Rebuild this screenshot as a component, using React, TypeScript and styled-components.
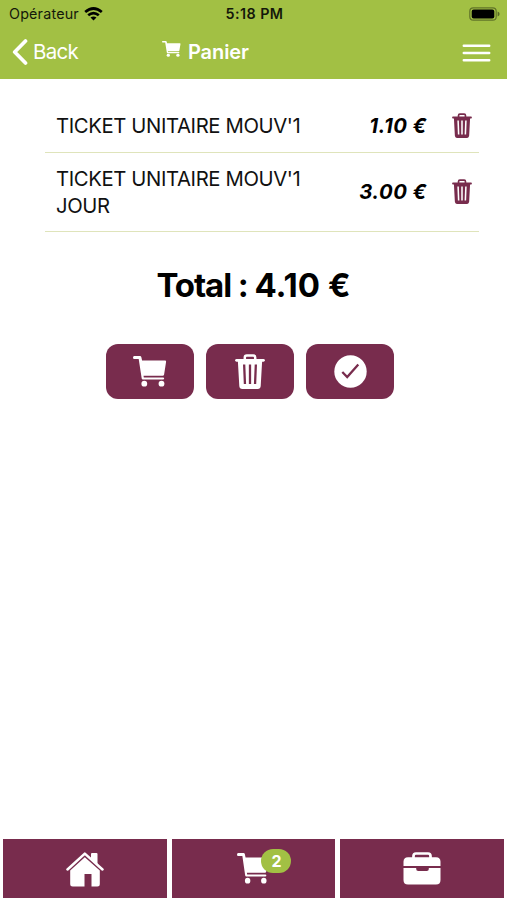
import React from 'react';
import styled, { createGlobalStyle } from 'styled-components';

const GREEN = '#a2c044';
const PLUM = '#782c4d';

const GlobalStyle = createGlobalStyle`
  * { box-sizing: border-box; }
  body { margin: 0; background: #fff; font-family: Inter, 'Liberation Sans', sans-serif; color: #0b0b0b; }
  svg { display: block; flex: none; }
  button { font: inherit; border: 0; padding: 0; background: none; }
`;

const Screen = styled.div`
  display: flex;
  flex-direction: column;
  height: 900px;
  width: 507px;
  overflow: hidden;
`;

const Header = styled.header`
  background: ${GREEN};
  height: 79px;
  flex: none;
`;

const StatusBar = styled.div`
  display: grid;
  grid-template-columns: 1fr auto 1fr;
  align-items: center;
  height: 27px;
  padding: 0 7px 0 9px;
  color: #14180a;
`;

const Carrier = styled.div`
  display: flex;
  align-items: center;
  gap: 5px;
  font-size: 14.3px;
  letter-spacing: 0.2px;
`;

const Clock = styled.div`
  font-size: 14.3px;
  font-weight: 600;
  letter-spacing: 0.45px;
`;

const Battery = styled.div`
  display: flex;
  justify-content: flex-end;
`;

const NavBar = styled.div`
  display: grid;
  grid-template-columns: 162px 1fr auto;
  align-items: center;
  height: 50px;
  padding: 0 16px 0 0;
  color: #fff;
`;

const BackButton = styled.button`
  display: flex;
  align-items: center;
  gap: 5px;
  padding-left: 12px;
  color: #fff;
  font-size: 20.5px;
  line-height: 26px;
  letter-spacing: -0.7px;
`;

const Title = styled.h1`
  display: flex;
  align-items: center;
  gap: 7px;
  margin: 0;
  font-size: 20px;
  font-weight: 600;
  line-height: 26px;
  letter-spacing: -0.1px;
  & > svg { margin-top: -6px; }
`;

const MenuButton = styled.button`
  color: #fff;
  padding-top: 2px;
`;

const Main = styled.main`
  flex: 1;
  padding: 22px 28px 0 45px;
`;

const CartList = styled.ul`
  list-style: none;
  margin: 0;
  padding: 0;
`;

const CartItem = styled.li`
  display: grid;
  grid-template-columns: 260px 1fr 52px;
  align-items: center;
  padding: 12px 0 12px 11px;
  border-bottom: 1px solid #dfe4bb;
  color: ${PLUM};
  &:first-child { padding-top: 11px; padding-bottom: 13px; }
  & > button { color: inherit; padding-left: 25px; }
  &:not(:first-child) > :not(:first-child) { margin-bottom: 2px; }
`;

const ItemName = styled.span`
  color: #111;
  font-size: 20.3px;
  line-height: 27px;
  letter-spacing: -0.38px;
`;

const Price = styled.span`
  color: #000;
  font-size: 20.3px;
  font-style: italic;
  font-weight: 700;
  letter-spacing: 0.5px;
  text-align: right;
`;

const Total = styled.h2`
  margin: 33px 0 0 -17px;
  font-size: 33px;
  line-height: 40px;
  font-weight: 700;
  text-align: center;
  color: #000;
`;

const TotalLabel = styled.span`
  letter-spacing: -1.1px;
`;

const Actions = styled.div`
  display: flex;
  gap: 12px;
  margin: 39px 0 0 61px;
`;

const ActionButton = styled.button`
  display: flex;
  align-items: center;
  justify-content: center;
  width: 88px;
  height: 55px;
  border-radius: 12px;
  background: ${PLUM};
  color: #fff;
`;

const TabBar = styled.nav`
  display: grid;
  grid-template-columns: repeat(3, 1fr);
  gap: 5px;
  height: 61px;
  padding: 0 3px 2px;
  flex: none;
`;

const Tab = styled.button`
  display: flex;
  align-items: center;
  justify-content: center;
  background: ${PLUM};
  color: #fff;
`;

const CartTabIcon = styled.span`
  position: relative;
`;

const Badge = styled.span`
  position: absolute;
  left: 24px;
  top: -4px;
  width: 30px;
  height: 24px;
  border-radius: 12px;
  background: ${GREEN};
  font-size: 16px;
  font-weight: 700;
  line-height: 24px;
  text-align: center;
`;

type Size = { width: number; height: number };

const CartIcon = ({ width, height }: Size) => (
  <svg width={width} height={height} viewBox="0 0 34 31" preserveAspectRatio="none" fill="currentColor">
    <path d="M1.200 0H7q1 0 1.300 1l.8 3.500h22.900q1.300 0 1.100 1.300l-2 12.700q-.2 1.300-1.500 1.300H10.500l.3 1.600h19.200q1.200 0 1.200 1.100t-1.200 1.100H9.900q-1 0-1.200-1L5.700 3H1.200Q0 3 0 1.500T1.200 0Z" />
    <circle cx="11.300" cy="27.700" r="2.900" />
    <circle cx="28.500" cy="27.700" r="2.900" />
  </svg>
);

const TrashIcon = ({ width, height }: Size) => (
  <svg width={width} height={height} viewBox="0 0 30 35" preserveAspectRatio="none" fill="none" stroke="currentColor">
    <path d="M9.800 6V3.500q0-2 2-2h6.400q2 0 2 2V6" strokeWidth="2.500" />
    <path d="M1.500 6.300h27" strokeWidth="2.700" strokeLinecap="round" />
    <path
      fill="currentColor"
      stroke="none"
      fillRule="evenodd"
      d="M2.800 6h24.400l-1.500 26q-.2 3-3 3H7.300q-2.800 0-3-3ZM8 10.500l.8 19.500h2.300l-.8-19.500ZM13.850 10.500v19.500h2.300V10.500ZM19.700 10.500 18.900 30h2.300l.8-19.500Z"
    />
  </svg>
);

const CheckIcon = () => (
  <svg width="33" height="33" viewBox="0 0 33 33">
    <circle cx="16.500" cy="16.500" r="16.200" fill="#fff" />
    <path d="m8.300 17 4.900 5L24.300 9.500" fill="none" stroke={PLUM} strokeWidth="2.300" />
  </svg>
);

const HomeIcon = () => (
  <svg width="38" height="36" viewBox="0 0 38 36" fill="currentColor">
    <path d="M1.500 18.500 18.800 2.600l17.700 15.900" fill="none" stroke="currentColor" strokeWidth="2.500" strokeLinecap="round" strokeLinejoin="round" />
    <path d="M25 5V3q0-1 1-1h4.500q1 0 1 1v10.500L25 7.500Z" />
    <path d="M4.200 19.400 18.800 6.200l15 13.400V33q0 2.500-2.500 2.500h-5.800V23h-7v12.500H6.700q-2.500 0-2.500-2.500Z" />
  </svg>
);

const BriefcaseIcon = () => (
  <svg width="38" height="33" viewBox="0 0 38 33" fill="currentColor">
    <path d="M10.500 6V4q0-2.500 2.500-2.500h12q2.500 0 2.500 2.500v2" fill="none" stroke="currentColor" strokeWidth="2.700" />
    <path d="M5 5.300h28q4.500 0 4.500 4.500V14H.5V9.800Q.5 5.300 5 5.300Z" />
    <path d="M.5 16h12.700v1q0 2 2 2h8.600q2 0 2-2v-1h11.700v12q0 4.500-4.500 4.500H5Q.5 32.500.5 28Z" />
  </svg>
);

const ChevronIcon = () => (
  <svg width="16" height="26" viewBox="0 0 16 26" fill="none" stroke="currentColor" strokeWidth="3.700" strokeLinecap="round" strokeLinejoin="round">
    <path d="M13.500 2 2.700 13l10.800 11" />
  </svg>
);

const MenuIcon = () => (
  <svg width="29" height="18" viewBox="0 0 29 18" stroke="currentColor" strokeWidth="2.500" strokeLinecap="round">
    <path d="M1.800 1.800h25.400M1.800 9h25.400M1.800 16.200h25.400" />
  </svg>
);

const WifiIcon = () => (
  <svg width="19" height="14" viewBox="0 0 19 14" fill="none" stroke="#000" strokeWidth="2.700">
    <path d="M1.200 5Q9.500-2 17.800 5M4.200 8.300q5.300-4.400 10.600 0" />
    <path d="m6.500 10.500 3 3 3-3q-3-2.200-6 0Z" fill="#000" stroke="none" />
  </svg>
);

const BatteryIcon = () => (
  <svg width="31" height="14" viewBox="0 0 31 14">
    <rect x=".8" y=".8" width="26.400" height="12.400" rx="3.500" fill="none" stroke="#000" strokeOpacity=".4" strokeWidth="1.200" />
    <rect x="2.700" y="2.500" width="22.600" height="9" rx="2" fill="#000" />
    <path d="M28.600 4.500v5q2-.8 2-2.500t-2-2.500Z" fill="#000" fillOpacity=".45" />
  </svg>
);

const items = [
  { name: "TICKET UNITAIRE MOUV'1", price: '1.10 €' },
  { name: "TICKET UNITAIRE MOUV'1 JOUR", price: '3.00 €' },
];

export default function App() {
  return (
    <Screen>
      <GlobalStyle />
      <Header>
        <StatusBar>
          <Carrier>Opérateur <WifiIcon /></Carrier>
          <Clock>5:18 PM</Clock>
          <Battery><BatteryIcon /></Battery>
        </StatusBar>
        <NavBar>
          <BackButton><ChevronIcon />Back</BackButton>
          <Title><CartIcon width={19} height={16} />Panier</Title>
          <MenuButton aria-label="Menu"><MenuIcon /></MenuButton>
        </NavBar>
      </Header>
      <Main>
        <CartList>
          {items.map((item) => (
            <CartItem key={item.name}>
              <ItemName>{item.name}</ItemName>
              <Price>{item.price}</Price>
              <button aria-label="Supprimer"><TrashIcon width={20} height={25} /></button>
            </CartItem>
          ))}
        </CartList>
        <Total><TotalLabel>Total : </TotalLabel>4.10 €</Total>
        <Actions>
          <ActionButton aria-label="Panier"><CartIcon width={34} height={31} /></ActionButton>
          <ActionButton aria-label="Vider"><TrashIcon width={30} height={35} /></ActionButton>
          <ActionButton aria-label="Valider"><CheckIcon /></ActionButton>
        </Actions>
      </Main>
      <TabBar>
        <Tab aria-label="Accueil"><HomeIcon /></Tab>
        <Tab aria-label="Panier">
          <CartTabIcon><CartIcon width={32} height={31} /><Badge>2</Badge></CartTabIcon>
        </Tab>
        <Tab aria-label="Boutique"><BriefcaseIcon /></Tab>
      </TabBar>
    </Screen>
  );
}
